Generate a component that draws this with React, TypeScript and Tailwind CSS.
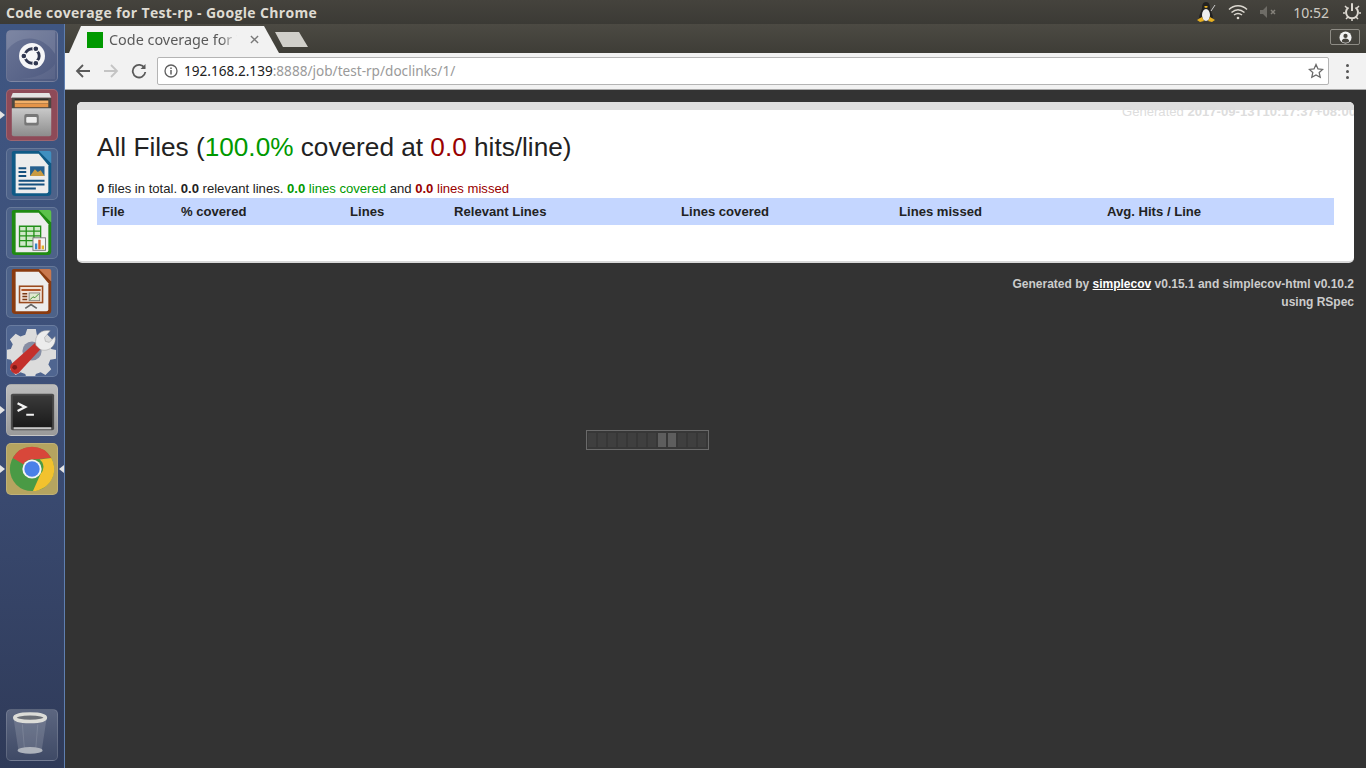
// Ubuntu desktop with Chrome showing an empty simplecov report

import { ReactNode } from 'react'

const columns = ['File', '% covered', 'Lines', 'Relevant Lines', 'Lines covered', 'Lines missed', 'Avg. Hits / Line']

/* ─── Launcher ─── */

function Tile({ tint, children, left, right }: { tint: string; children: ReactNode; left?: boolean; right?: boolean }) {
  return (
    <div className="relative h-[52px] w-[52px] shrink-0">
      <div className={`h-full w-full overflow-hidden rounded-[5px] border border-white/15 ${tint}`}>{children}</div>
      {left && <div className="absolute left-[-6px] top-[22px] h-0 w-0 border-y-[4px] border-l-[5px] border-y-transparent border-l-[#e4e4e4]" />}
      {right && <div className="absolute right-[-6px] top-[22px] h-0 w-0 border-y-[4px] border-r-[5px] border-y-transparent border-r-[#e4e4e4]" />}
    </div>
  )
}

function DashIcon() {
  return (
    <svg viewBox="0 0 52 52" className="h-full w-full">
      <path d="M0 20C12 4 36 2 50 24V0H0Z" fill="#fff" opacity="0.12" />
      <path d="M50 34C40 48 20 50 8 50H50Z" fill="#fff" opacity="0.06" />
      <circle cx="26" cy="26" r="13.500" fill="#f6f6f8" />
      <circle cx="26" cy="26" r="7.500" fill="none" stroke="#2f3650" strokeWidth="3" />
      <circle cx="30" cy="18.500" r="3" fill="#2f3650" stroke="#f6f6f8" strokeWidth="1.200" />
      <circle cx="17.500" cy="26" r="3" fill="#2f3650" stroke="#f6f6f8" strokeWidth="1.200" />
      <circle cx="30" cy="33.500" r="3" fill="#2f3650" stroke="#f6f6f8" strokeWidth="1.200" />
    </svg>
  )
}

function CabinetIcon() {
  return (
    <svg viewBox="0 0 52 52" className="h-full w-full">
      <defs>
        <linearGradient id="cabinet" x1="0" y1="0" x2="0" y2="1">
          <stop offset="0" stopColor="#c9c9c9" />
          <stop offset="1" stopColor="#8d8d8d" />
        </linearGradient>
      </defs>
      <path d="M6 3h38l2 5H4Z" fill="#e2e2e2" />
      <path d="M5 8h41v12H5Z" fill="#4a4743" />
      <path d="M8 9h35v9H8Z" fill="#2e2c29" />
      <path d="M8 11h35v3H8Z" fill="#f2b069" />
      <path d="M8 14h35v4H8Z" fill="#e59448" />
      <path d="M5 19h41v27a2 2 0 0 1-2 2H7a2 2 0 0 1-2-2Z" fill="url(#cabinet)" />
      <rect x="18" y="25" width="15" height="12" rx="2" fill="#777" />
      <rect x="20" y="28" width="11" height="6" rx="1" fill="#ececec" />
    </svg>
  )
}

function OfficeIcon({ frame, corner, children }: { frame: string; corner: string; children: ReactNode }) {
  return (
    <svg viewBox="0 0 52 52" className="h-full w-full">
      <path d="M7 2h28l11 13v30a4 4 0 0 1-4 4H9a4 4 0 0 1-4-4V4a2 2 0 0 1 2-2Z" fill={frame} />
      <path d="M33 2h11a2 2 0 0 1 2 2v11Z" fill={corner} />
      <path d="M9 5h24l10 12v27a2 2 0 0 1-2 2H9Z" fill="#ededed" />
      {children}
    </svg>
  )
}

function WriterIcon() {
  return (
    <OfficeIcon frame="#0f5a86" corner="#3f8fc0">
      <path d="M12 19h8v2h-8ZM12 23h8v2h-8ZM12 27h8v2h-8ZM12 32h27v2H12ZM12 36h27v2H12ZM12 40h18v2H12Z" fill="#14507f" />
      <rect x="24" y="18" width="15" height="10" fill="#26608f" />
      <path d="M24 28l5-7 3 3 3-2 4 6Z" fill="#c99a42" />
    </OfficeIcon>
  )
}

function CalcIcon() {
  return (
    <OfficeIcon frame="#1f8a12" corner="#5cc24a">
      <path d="M13 19h22v21H13Z" fill="#cfe8c8" stroke="#23901a" strokeWidth="1.400" />
      <path d="M13 24h22M13 29h22M13 34h22M20 19v21M28 19v21" stroke="#23901a" strokeWidth="1.400" />
      <rect x="27" y="31" width="13" height="13" fill="#f4f4f4" stroke="#777" />
      <path d="M29 37h2.500v6H29Z" fill="#3a86c8" />
      <path d="M32.500 33h2.500v10h-2.500Z" fill="#d8602a" />
      <path d="M36 39h2.500v4H36Z" fill="#e0b22a" />
    </OfficeIcon>
  )
}

function ImpressIcon() {
  return (
    <OfficeIcon frame="#8a3b10" corner="#c9784e">
      <rect x="13" y="20" width="24" height="17" fill="#f0e2d8" stroke="#9a4a1e" strokeWidth="1.600" />
      <path d="M15 23h20v2H15Z" fill="#b0562a" />
      <path d="M16 27h5v1.500h-5ZM16 30h5v1.500h-5ZM16 33h5v1.500h-5Z" fill="#7a3a16" />
      <rect x="23" y="27" width="11" height="8" fill="#dfe8d0" stroke="#777" strokeWidth="0.800" />
      <path d="M24 34l3-3 2 1 4-4" stroke="#3f8f2f" fill="none" />
      <path d="M19 43l6-4 6 4" stroke="#666" strokeWidth="1.800" fill="none" />
    </OfficeIcon>
  )
}

function SettingsIcon() {
  return (
    <svg viewBox="0 0 52 52" className="h-full w-full">
      <path
        d="M21 3h9l1 6 5 2 5-3 6 6-3 5 2 5 5 1v9l-6 1-2 5 3 5-6 6-5-3-5 2-1 3h-9l-1-3-5-2-5 3-6-6 3-5-2-5-5-1v-9l5-1 2-5-3-5 6-6 5 3 5-2Z"
        fill="#dcdcdc"
      />
      <circle cx="26" cy="26" r="10" fill="#868da3" />
      <path d="M4 40l26-23 6 6-24 26c-4 3-11-3-8-9Z" fill="#c4302b" />
      <circle cx="8" cy="43" r="2.500" fill="#7e1a18" />
      <path d="M30 20c-2-10 5-17 15-15l-6 7 1 4 4 1 6-6c2 11-9 17-16 13Z" fill="#ececec" stroke="#999" strokeWidth="0.500" />
    </svg>
  )
}

function TerminalIcon() {
  return (
    <svg viewBox="0 0 52 52" className="h-full w-full">
      <defs>
        <linearGradient id="term" x1="0" y1="0" x2="0" y2="1">
          <stop offset="0" stopColor="#3a3a3a" />
          <stop offset="1" stopColor="#1a1a1a" />
        </linearGradient>
      </defs>
      <rect x="4" y="9" width="45" height="38" rx="2" fill="#4a4a4a" />
      <rect x="6" y="11" width="41" height="33" fill="url(#term)" />
      <path d="M7 44h39v2H7Z" fill="#c8c8c8" />
      <path d="M11 19l8 4-8 4" fill="none" stroke="#f2f2f2" strokeWidth="2.400" />
      <path d="M20 30h8v2h-8Z" fill="#f2f2f2" />
    </svg>
  )
}

function ChromeIcon() {
  return (
    <svg viewBox="0 0 52 52" className="h-full w-full">
      <circle cx="26" cy="26" r="23" fill="#4a9a45" />
      <path d="M6 14.500A23 23 0 0 1 46 14.500L26 16A10 10 0 0 0 17 21Z" fill="#d8473a" />
      <path d="M46 14.500A23 23 0 0 1 27 49L35 31A10 10 0 0 0 34 16Z" fill="#f2c22e" />
      <circle cx="26" cy="26" r="10" fill="#f4f4f4" />
      <circle cx="26" cy="26" r="8" fill="#4a80e8" />
    </svg>
  )
}

function TrashIcon() {
  return (
    <svg viewBox="0 0 52 52" className="h-full w-full">
      <path d="M7 10l5 33c0 3 24 3 24 0l5-33Z" fill="#fff" opacity="0.14" />
      <ellipse cx="24" cy="42" rx="13" ry="3.500" fill="#c8ccd0" opacity="0.75" />
      <ellipse cx="24" cy="8" rx="16" ry="4" fill="#6a6e76" stroke="#dcdcd8" strokeWidth="3.500" />
      <path d="M16 15l2 24M32 15l-2 24" stroke="#fff" opacity="0.12" />
    </svg>
  )
}

function Launcher() {
  return (
    <aside className="flex w-[65px] shrink-0 flex-col gap-[7px] border-r border-[#5f7fb0] bg-gradient-to-b from-[#3f5682] via-[#3d4f78] to-[#2f3a58] py-[6px] pl-[6px]">
      <Tile tint="bg-gradient-to-br from-[#6b7596] to-[#4e5a80]"><DashIcon /></Tile>
      <Tile tint="bg-[#8e4a58]" left><CabinetIcon /></Tile>
      <Tile tint="bg-[#4d6289]"><WriterIcon /></Tile>
      <Tile tint="bg-[#4d6289]"><CalcIcon /></Tile>
      <Tile tint="bg-[#4d6289]"><ImpressIcon /></Tile>
      <Tile tint="bg-[#4f6590]"><SettingsIcon /></Tile>
      <Tile tint="bg-gradient-to-b from-[#bcbcbc] to-[#9a9a9a]" left><TerminalIcon /></Tile>
      <Tile tint="bg-[#b5a460]" left right><ChromeIcon /></Tile>
      <div className="mt-auto mb-[1px]">
        <Tile tint="bg-gradient-to-b from-[#5c6680] to-[#3f4a66]"><TrashIcon /></Tile>
      </div>
    </aside>
  )
}

/* ─── Top panel ─── */

function TopBar() {
  return (
    <header className="flex h-6 items-center justify-between bg-gradient-to-b from-[#45433d] to-[#3b3a35] pl-[6px] font-['Open_Sans',sans-serif]">
      <span className="text-[14px] font-bold tracking-[0.35px] text-[#dfdbd2]">Code coverage for Test-rp - Google Chrome</span>
      <div className="flex items-center text-[#cfcbc3]">
        <svg viewBox="0 0 20 22" className="mr-[12px] h-[22px] w-[20px]">
          <path d="M10 1c3 0 4 3 4 6 0 3 3 6 3 10H3c0-4 3-7 3-10 0-3 1-6 4-6Z" fill="#222" />
          <ellipse cx="10" cy="14" rx="4" ry="6" fill="#eee" />
          <path d="M1 19l5-3 2 4-4 1ZM19 19l-5-3-2 4 4 1Z" fill="#e8b020" />
          <path d="M9 5h2l1 1-2 1-2-1Z" fill="#e8b020" />
          <path d="M15 10l4-6" stroke="#ccc" />
        </svg>
        <svg viewBox="0 0 20 16" className="mr-[12px] h-[16px] w-[20px]" fill="none" stroke="#dcd8d0" strokeWidth="1.500">
          <path d="M1 5.500c5-5 13-5 18 0M3.500 8.500c4-3.500 9-3.500 13 0M6 11c2.500-2 5.500-2 8 0" />
          <circle cx="10" cy="14" r="1.300" fill="#dcd8d0" stroke="none" />
        </svg>
        <svg viewBox="0 0 18 12" className="mr-[15px] h-[12px] w-[18px]">
          <path d="M0 4h3l4-4v12l-4-4H0Z" fill="#6e6c66" />
          <path d="M11 4l4 4M15 4l-4 4" stroke="#85827b" strokeWidth="1.500" />
        </svg>
        <span className="mr-[14px] font-['Noto_Sans',sans-serif] text-[14px] text-[#cfcbc3]">10:52</span>
        <svg viewBox="0 0 18 18" className="mr-[5px] h-[18px] w-[18px]" fill="none" stroke="#dcd8d0" strokeWidth="2">
          <path d="M9 1v7" />
          <path d="M5.500 4.500a6 6 0 1 0 7 0" />
          <path d="M9 0v2M2 3l2 2M16 3l-2 2M0 10h2M16 10h2M3 16l2-2M15 16l-2-2M9 16v2" strokeWidth="1.500" />
        </svg>
      </div>
    </header>
  )
}

/* ─── Chrome window ─── */

function TabStrip() {
  return (
    <div className="relative flex h-[29px] items-end bg-gradient-to-b from-[#4c4a43] to-[#3e3d37] pl-[4px]">
      <div className="flex h-[27px] w-[210px] items-center bg-[#f2f2f2] pl-[18px] [clip-path:polygon(0_100%,12px_0,195px_0,210px_100%)]">
        <div className="h-4 w-4 bg-[#009900]" />
        <span className="ml-[6px] w-[134px] overflow-hidden whitespace-nowrap font-['Noto_Sans',sans-serif] text-[14.4px] leading-[19px] text-[#5a5a5a] [mask-image:linear-gradient(to_right,#000_112px,transparent_128px)]">
          Code coverage for Test-rp
        </span>
        <svg viewBox="0 0 10 10" className="ml-[7px] h-[9px] w-[9px]" stroke="#7a7a7a" strokeWidth="1.500">
          <path d="M1 1l8 8M9 1l-8 8" />
        </svg>
      </div>
      <div className="mb-[6px] ml-[-4px] h-[15px] w-[33px] bg-[#d0cfca] [clip-path:polygon(0_0,24px_0,33px_100%,8px_100%)]" />
      <div className="ml-auto mr-[6px] mb-[8px] flex h-[16px] w-[30px] items-center justify-center rounded-[2px] border border-[#8e8c85]">
        <svg viewBox="0 0 14 14" className="h-[13px] w-[13px]">
          <circle cx="7" cy="7" r="6.500" fill="#f2f2f2" />
          <circle cx="7" cy="5.300" r="2.300" fill="#45433d" />
          <path d="M2.800 11c.6-2 2.400-2.800 4.200-2.800s3.600.8 4.200 2.800a6 6 0 0 1-8.400 0Z" fill="#45433d" />
        </svg>
      </div>
    </div>
  )
}

function Toolbar() {
  return (
    <div className="flex h-[37px] items-center border-b border-[#a8a8a8] bg-[#f2f2f2] pl-[10px]">
      <svg viewBox="0 0 16 16" className="h-4 w-4" fill="none" stroke="#5a5a5a" strokeWidth="1.800">
        <path d="M15 8H2M8 2L2 8l6 6" />
      </svg>
      <svg viewBox="0 0 16 16" className="ml-[12px] h-4 w-4" fill="none" stroke="#c4c4c4" strokeWidth="1.800">
        <path d="M1 8h13M8 2l6 6-6 6" />
      </svg>
      <svg viewBox="0 0 16 16" className="ml-[12px] h-4 w-4" fill="none" stroke="#5a5a5a" strokeWidth="1.800">
        <path d="M13.500 5A6.300 6.300 0 1 0 14.300 9" />
        <path d="M14.500 1v5h-5" fill="#5a5a5a" stroke="none" />
      </svg>
      <div className="ml-[10px] flex h-[28px] w-[1172px] items-center rounded-[2px] border border-[#b4b4b4] bg-white pl-[6px] pr-[4px]">
        <svg viewBox="0 0 14 14" className="h-[14px] w-[14px]" fill="none" stroke="#5f5f5f" strokeWidth="1.300">
          <circle cx="7" cy="7" r="6" />
          <path d="M7 6v4.500" strokeWidth="1.500" />
          <path d="M7 3.500v1.500" strokeWidth="1.500" />
        </svg>
        <span className="ml-[6px] font-['Noto_Sans',sans-serif] text-[13.6px] text-[#222]">
          192.168.2.139<span className="text-[#9a9a9a]">:8888/job/test-rp/doclinks/1/</span>
        </span>
        <svg viewBox="0 0 16 16" className="ml-auto h-4 w-4" fill="none" stroke="#6a6a6a" strokeWidth="1.300">
          <path d="M8 1.500l2 4.400 4.700.5-3.500 3.200 1 4.700L8 11.900l-4.200 2.400 1-4.700L1.300 6.400 6 5.900Z" />
        </svg>
      </div>
      <div className="ml-[17px] flex flex-col gap-[3px]">
        <span className="h-[3px] w-[3px] rounded-full bg-[#555]" />
        <span className="h-[3px] w-[3px] rounded-full bg-[#555]" />
        <span className="h-[3px] w-[3px] rounded-full bg-[#555]" />
      </div>
    </div>
  )
}

function LoadingBar() {
  const cells = Array.from({ length: 12 }, (_, i) => i)
  return (
    <div className="absolute left-[521px] top-[340px] flex h-5 w-[123px] items-center gap-[2px] border border-[#6a6a6a] bg-[#373737] px-[1px]">
      {cells.map((i) => (
        <div key={i} className={`h-[14px] w-[8px] ${i === 7 || i === 8 ? 'bg-[#5e5e5e]' : 'bg-[#3f3f3f]'}`} />
      ))}
    </div>
  )
}

function Report() {
  return (
    <main className="relative flex-1 overflow-hidden bg-[#333333] pl-3 pr-3 pt-3 font-['Liberation_Sans',sans-serif]">
      <section className="h-[161px] w-[1277px] overflow-hidden rounded-[5px] border-b-2 border-[#d8d8d8] bg-white">
        <div className="h-2 bg-[#dedede]" />
        <div className="mt-[-4px] mr-[-2px] flex h-[14px] justify-end overflow-hidden whitespace-nowrap text-[13.1px] leading-[12px] text-[#dddddd]">
          <span>
            Generated <b>2017-09-13T10:17:37+08:00</b>
          </span>
        </div>
        <div className="px-5">
          <h1 className="mt-[12px] text-[26.2px] leading-[30px] text-[#222]">
            All Files (<span className="text-[#009900]">100.0%</span> covered at <span className="text-[#990000]">0.0</span> hits/line)
          </h1>
          <p className="mt-[18px] text-[13.1px] leading-[18px] text-[#222]">
            <b>0</b> files in total. <b>0.0</b> relevant lines.{' '}
            <span className="text-[#009900]"><b>0.0</b> lines covered</span> and{' '}
            <span className="text-[#990000]"><b>0.0</b> lines missed</span>
          </p>
          <div className="grid h-[27px] grid-cols-[79px_169px_104px_227px_218px_208px_1fr] items-center bg-[#c4d6ff] pl-[5px] text-[13.1px] font-bold text-[#222]">
            {columns.map((c) => (
              <span key={c}>{c}</span>
            ))}
          </div>
        </div>
      </section>
      <footer className="mt-[12px] w-[1277px] text-right text-[12px] font-bold leading-[18px] text-[#cccccc]">
        <p>
          Generated by <span className="text-white underline">simplecov</span> v0.15.1 and simplecov-html v0.10.2
        </p>
        <p>using RSpec</p>
      </footer>
      <LoadingBar />
    </main>
  )
}

export default function App() {
  return (
    <div className="flex h-[768px] w-[1366px] flex-col overflow-hidden">
      <TopBar />
      <div className="flex min-h-0 flex-1">
        <Launcher />
        <div className="flex min-w-0 flex-1 flex-col">
          <TabStrip />
          <Toolbar />
          <Report />
        </div>
      </div>
    </div>
  )
}
